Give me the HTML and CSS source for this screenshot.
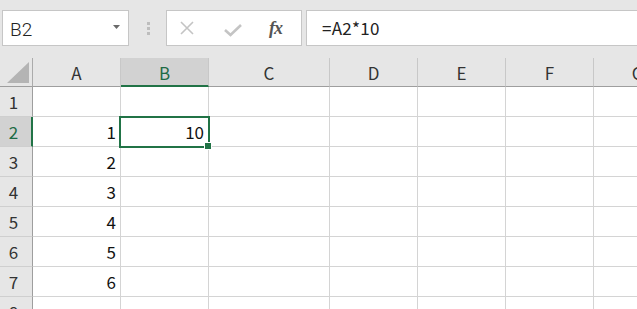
FILE: index.html
```html
<!DOCTYPE html>
<html>
<head>
<meta charset="utf-8">
<link rel="stylesheet" href="styles.css">
</head>
<body>
<div class="toolbar">
  <div class="namebox">
    <span class="name">B2</span>
    <svg class="drop" width="7" height="4" viewBox="0 0 7 4"><polygon points="0,0 7,0 3.5,4" fill="#6a6a6a"/></svg>
  </div>
  <div class="grip"><i></i><i></i><i></i></div>
  <div class="fxbox">
    <svg class="ico" width="14" height="14" viewBox="0 0 14 14"><path d="M1 1 L13 13 M13 1 L1 13" stroke="#c4c4c4" stroke-width="1.6" fill="none"/></svg>
    <svg class="ico" width="18" height="14" viewBox="0 0 18 14"><path d="M1 7 L6.5 12 L17 2" stroke="#c4c4c4" stroke-width="2.6" fill="none"/></svg>
    <span class="fx">fx</span>
  </div>
  <div class="formula">=A2*10</div>
</div>
<div class="sheet">
  <div class="grid">
    <div class="corner"><svg width="32" height="28" viewBox="0 0 32 28"><polygon points="7,25 29,25 29,4" fill="#b4b4b4"/></svg></div>
    <div class="ch">A</div><div class="ch sel">B</div><div class="ch">C</div><div class="ch">D</div><div class="ch">E</div><div class="ch">F</div><div class="ch">G</div>

    <div class="rh">1</div><div class="c"></div><div class="c"></div><div class="c"></div><div class="c"></div><div class="c"></div><div class="c"></div><div class="c"></div>
    <div class="rh sel">2</div><div class="c">1</div><div class="c">10</div><div class="c"></div><div class="c"></div><div class="c"></div><div class="c"></div><div class="c"></div>
    <div class="rh">3</div><div class="c">2</div><div class="c"></div><div class="c"></div><div class="c"></div><div class="c"></div><div class="c"></div><div class="c"></div>
    <div class="rh">4</div><div class="c">3</div><div class="c"></div><div class="c"></div><div class="c"></div><div class="c"></div><div class="c"></div><div class="c"></div>
    <div class="rh">5</div><div class="c">4</div><div class="c"></div><div class="c"></div><div class="c"></div><div class="c"></div><div class="c"></div><div class="c"></div>
    <div class="rh">6</div><div class="c">5</div><div class="c"></div><div class="c"></div><div class="c"></div><div class="c"></div><div class="c"></div><div class="c"></div>
    <div class="rh">7</div><div class="c">6</div><div class="c"></div><div class="c"></div><div class="c"></div><div class="c"></div><div class="c"></div><div class="c"></div>
    <div class="rh">8</div><div class="c"></div><div class="c"></div><div class="c"></div><div class="c"></div><div class="c"></div><div class="c"></div><div class="c"></div>
  </div>
  <div class="selection"></div>
  <div class="handle"></div>
</div>
</body>
</html>
```

FILE: styles.css
```css
html, body {
  margin: 0;
  padding: 0;
  background: #e6e6e6;
  overflow: hidden;
  width: 637px;
  height: 309px;
}
body {
  font-family: "Noto Sans CJK JP", "Noto Sans", sans-serif;
}
.toolbar {
  display: flex;
  box-sizing: border-box;
  height: 58px;
  padding-top: 10px;
  align-items: flex-start;
}
.namebox {
  margin-left: 2px;
  width: 127px;
  height: 36px;
  box-sizing: border-box;
  background: #fff;
  border: 1px solid #c6c6c6;
  display: flex;
  align-items: center;
  padding: 3px 8px 0 7px;
}
.name {
  font-family: Roboto, "Liberation Sans", sans-serif;
  font-weight: 300;
  font-size: 19px;
  color: #222;
  flex: 1;
}
.drop {
  margin-top: -5px;
}
.grip {
  width: 37px;
  height: 36px;
  display: flex;
  flex-direction: column;
  align-items: center;
  justify-content: center;
  gap: 2px;
  padding-left: 2px;
  box-sizing: border-box;
}
.grip i {
  display: block;
  width: 3px;
  height: 3px;
  background: #bdbdbd;
}
.fxbox {
  width: 136px;
  height: 36px;
  box-sizing: border-box;
  background: #fff;
  border: 1px solid #c6c6c6;
  display: flex;
  align-items: center;
  padding: 0 0 0 13px;
}
.fxbox .ico:first-child {
  margin-right: 30px;
}
.fxbox .ico:nth-child(2) {
  margin-top: 4px;
  margin-right: 27px;
}
.fx {
  font-family: "Liberation Serif", serif;
  font-style: italic;
  font-weight: bold;
  font-size: 18px;
  color: #555;
  letter-spacing: -1px;
}
.formula {
  flex: 1;
  margin-left: 4px;
  margin-right: -2px;
  height: 36px;
  box-sizing: border-box;
  background: #fff;
  border: 1px solid #c6c6c6;
  font-size: 17px;
  letter-spacing: 0.3px;
  line-height: 34px;
  color: #222;
  padding-left: 15px;
}
.sheet {
  position: relative;
}
.grid {
  display: grid;
  grid-template-columns: 33px 88px 88px 121px 88px 88px 88px 88px;
  grid-template-rows: 29px repeat(8, 30px);
}
.grid > div {
  box-sizing: border-box;
  display: flex;
  align-items: center;
  font-size: 17px;
  line-height: 1;
}
.corner {
  border-right: 1px solid #ababab;
  border-bottom: 1px solid #9e9e9e;
}
.corner svg {
  display: block;
}
.ch {
  justify-content: center;
  border-right: 1px solid #c8c8c8;
  border-bottom: 1px solid #9e9e9e;
  color: #333;
  padding-top: 1px;
}
.ch.sel {
  background: #d2d2d2;
  border-bottom: 2px solid #217346;
  color: #1d6b45;
}
.rh {
  justify-content: center;
  padding-right: 5px;
  border-right: 1px solid #9e9e9e;
  border-bottom: 1px solid #cfcfcf;
  color: #333;
}
.rh.sel {
  background: #d2d2d2;
  border-right: 2px solid #217346;
  padding-right: 4px;
  color: #1d6b45;
}
.c {
  background: #fff;
  justify-content: flex-end;
  padding-right: 4px;
  border-right: 1px solid #d4d4d4;
  border-bottom: 1px solid #d4d4d4;
  color: #111;
}
.selection {
  position: absolute;
  left: 119px;
  top: 58px;
  width: 91px;
  height: 32px;
  box-sizing: border-box;
  border: 2px solid #217346;
}
.handle {
  position: absolute;
  left: 204px;
  top: 84px;
  width: 6px;
  height: 6px;
  background: #217346;
  border: 1px solid #fff;
}
```
